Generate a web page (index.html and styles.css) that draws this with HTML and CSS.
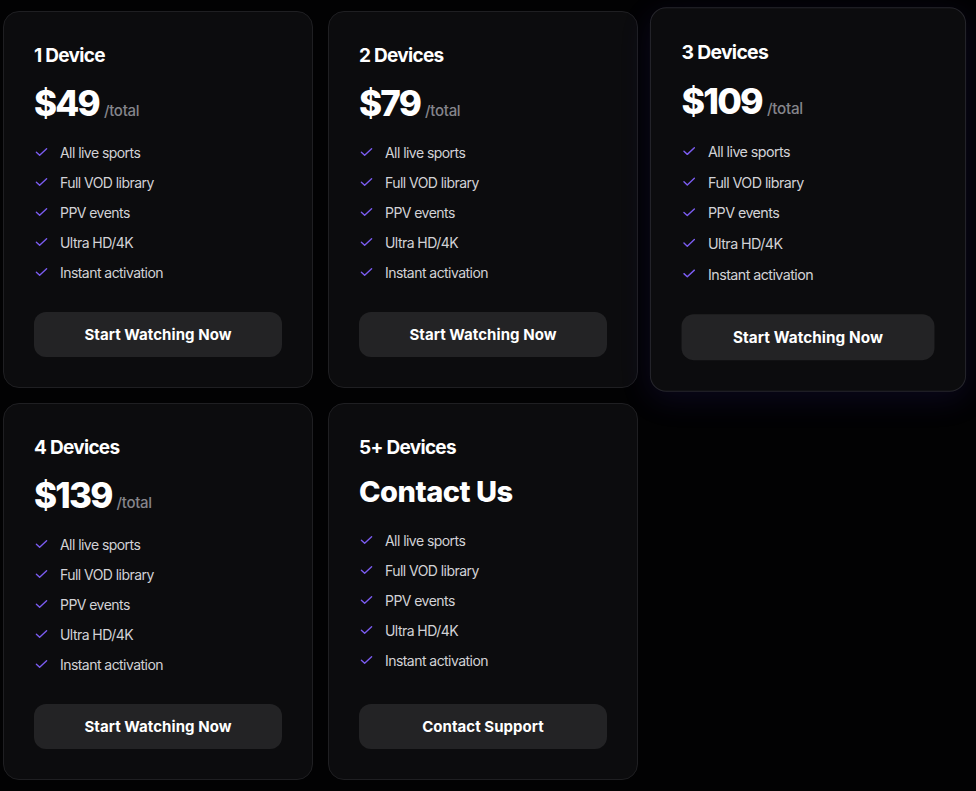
FILE: index.html
```html
<!DOCTYPE html>
<html lang="en">
<head>
<meta charset="utf-8">
<title>Pricing</title>
<link rel="stylesheet" href="styles.css">
</head>
<body>
<main class="grid">
  <div class="card">
    <h3 class="title">1 Device</h3>
    <div class="price"><span class="amount">$49</span><span class="per">/total</span></div>
    <ul class="features">
      <li><svg class="chk" viewBox="0 0 14 10"><path d="M1.5 5.2 L5 8.5 L12.5 1.5"/></svg>All live sports</li>
      <li><svg class="chk" viewBox="0 0 14 10"><path d="M1.5 5.2 L5 8.5 L12.5 1.5"/></svg>Full VOD library</li>
      <li><svg class="chk" viewBox="0 0 14 10"><path d="M1.5 5.2 L5 8.5 L12.5 1.5"/></svg>PPV events</li>
      <li><svg class="chk" viewBox="0 0 14 10"><path d="M1.5 5.2 L5 8.5 L12.5 1.5"/></svg>Ultra HD/4K</li>
      <li><svg class="chk" viewBox="0 0 14 10"><path d="M1.5 5.2 L5 8.5 L12.5 1.5"/></svg>Instant activation</li>
    </ul>
    <button class="btn">Start Watching Now</button>
  </div>
  <div class="card">
    <h3 class="title">2 Devices</h3>
    <div class="price"><span class="amount">$79</span><span class="per">/total</span></div>
    <ul class="features">
      <li><svg class="chk" viewBox="0 0 14 10"><path d="M1.5 5.2 L5 8.5 L12.5 1.5"/></svg>All live sports</li>
      <li><svg class="chk" viewBox="0 0 14 10"><path d="M1.5 5.2 L5 8.5 L12.5 1.5"/></svg>Full VOD library</li>
      <li><svg class="chk" viewBox="0 0 14 10"><path d="M1.5 5.2 L5 8.5 L12.5 1.5"/></svg>PPV events</li>
      <li><svg class="chk" viewBox="0 0 14 10"><path d="M1.5 5.2 L5 8.5 L12.5 1.5"/></svg>Ultra HD/4K</li>
      <li><svg class="chk" viewBox="0 0 14 10"><path d="M1.5 5.2 L5 8.5 L12.5 1.5"/></svg>Instant activation</li>
    </ul>
    <button class="btn">Start Watching Now</button>
  </div>
  <div class="card card-hover">
    <h3 class="title">3 Devices</h3>
    <div class="price"><span class="amount">$109</span><span class="per">/total</span></div>
    <ul class="features">
      <li><svg class="chk" viewBox="0 0 14 10"><path d="M1.5 5.2 L5 8.5 L12.5 1.5"/></svg>All live sports</li>
      <li><svg class="chk" viewBox="0 0 14 10"><path d="M1.5 5.2 L5 8.5 L12.5 1.5"/></svg>Full VOD library</li>
      <li><svg class="chk" viewBox="0 0 14 10"><path d="M1.5 5.2 L5 8.5 L12.5 1.5"/></svg>PPV events</li>
      <li><svg class="chk" viewBox="0 0 14 10"><path d="M1.5 5.2 L5 8.5 L12.5 1.5"/></svg>Ultra HD/4K</li>
      <li><svg class="chk" viewBox="0 0 14 10"><path d="M1.5 5.2 L5 8.5 L12.5 1.5"/></svg>Instant activation</li>
    </ul>
    <button class="btn">Start Watching Now</button>
  </div>
  <div class="card">
    <h3 class="title">4 Devices</h3>
    <div class="price"><span class="amount">$139</span><span class="per">/total</span></div>
    <ul class="features">
      <li><svg class="chk" viewBox="0 0 14 10"><path d="M1.5 5.2 L5 8.5 L12.5 1.5"/></svg>All live sports</li>
      <li><svg class="chk" viewBox="0 0 14 10"><path d="M1.5 5.2 L5 8.5 L12.5 1.5"/></svg>Full VOD library</li>
      <li><svg class="chk" viewBox="0 0 14 10"><path d="M1.5 5.2 L5 8.5 L12.5 1.5"/></svg>PPV events</li>
      <li><svg class="chk" viewBox="0 0 14 10"><path d="M1.5 5.2 L5 8.5 L12.5 1.5"/></svg>Ultra HD/4K</li>
      <li><svg class="chk" viewBox="0 0 14 10"><path d="M1.5 5.2 L5 8.5 L12.5 1.5"/></svg>Instant activation</li>
    </ul>
    <button class="btn">Start Watching Now</button>
  </div>
  <div class="card">
    <h3 class="title">5+ Devices</h3>
    <div class="price contact"><span class="amount-sm">Contact Us</span></div>
    <ul class="features">
      <li><svg class="chk" viewBox="0 0 14 10"><path d="M1.5 5.2 L5 8.5 L12.5 1.5"/></svg>All live sports</li>
      <li><svg class="chk" viewBox="0 0 14 10"><path d="M1.5 5.2 L5 8.5 L12.5 1.5"/></svg>Full VOD library</li>
      <li><svg class="chk" viewBox="0 0 14 10"><path d="M1.5 5.2 L5 8.5 L12.5 1.5"/></svg>PPV events</li>
      <li><svg class="chk" viewBox="0 0 14 10"><path d="M1.5 5.2 L5 8.5 L12.5 1.5"/></svg>Ultra HD/4K</li>
      <li><svg class="chk" viewBox="0 0 14 10"><path d="M1.5 5.2 L5 8.5 L12.5 1.5"/></svg>Instant activation</li>
    </ul>
    <button class="btn">Contact Support</button>
  </div>
</main>
</body>
</html>
```
FILE: styles.css
```css
* { box-sizing: border-box; }
html, body { margin: 0; background: #020203; }
body {
  font-family: Inter, "Noto Sans", sans-serif;
  color: #fff;
  padding: 11px 0 0 3px;
}
.grid {
  display: grid;
  grid-template-columns: repeat(3, 310px);
  column-gap: 15px;
  row-gap: 15px;
}
.card {
  background: #0c0c0e;
  border: 1px solid #1f1f22;
  border-radius: 16px;
  padding: 30px 30px 30px;
  display: flex;
  flex-direction: column;
}
.card-hover {
  transform: scale(1.02);
  border-color: #26262c;
  box-shadow: 0 8px 30px rgba(70, 50, 190, 0.14);
}
.title {
  margin: 0;
  font-size: 19px;
  line-height: 28px;
  font-weight: 700;
  letter-spacing: -0.7px;
}
.price {
  margin-top: 10px;
  display: flex;
  align-items: baseline;
  height: 48px;
}
.amount {
  font-size: 35px;
  line-height: 46px;
  font-weight: 800;
  letter-spacing: -1.8px;
}
.amount-sm {
  font-size: 29px;
  line-height: 40px;
  font-weight: 800;
  letter-spacing: -0.5px;
}
.contact { height: 44px; }
.per {
  margin-left: 5px;
  font-size: 15px;
  color: #85858b;
  font-weight: 500;
  letter-spacing: -0.3px;
}
.features {
  list-style: none;
  margin: 14px 0 30px;
  padding: 0;
  display: flex;
  flex-direction: column;
  gap: 10px;
}
.features li {
  display: flex;
  align-items: center;
  height: 20px;
  font-size: 14px;
  color: #d2d2d6;
  letter-spacing: -0.55px;
}
.chk {
  width: 13px;
  height: 10px;
  margin-left: 1px;
  margin-right: 12px;
  flex: none;
  fill: none;
  stroke: #7b5cf0;
  stroke-width: 1.5;
  stroke-linecap: round;
  stroke-linejoin: round;
}
.btn {
  margin-top: auto;
  height: 45px;
  width: 100%;
  flex: none;
  border: none;
  border-radius: 12px;
  background: #232325;
  color: #fff;
  font-family: Inter, "Noto Sans", sans-serif;
  font-size: 15px;
  font-weight: 700;
  letter-spacing: 0.05px;
}
```
